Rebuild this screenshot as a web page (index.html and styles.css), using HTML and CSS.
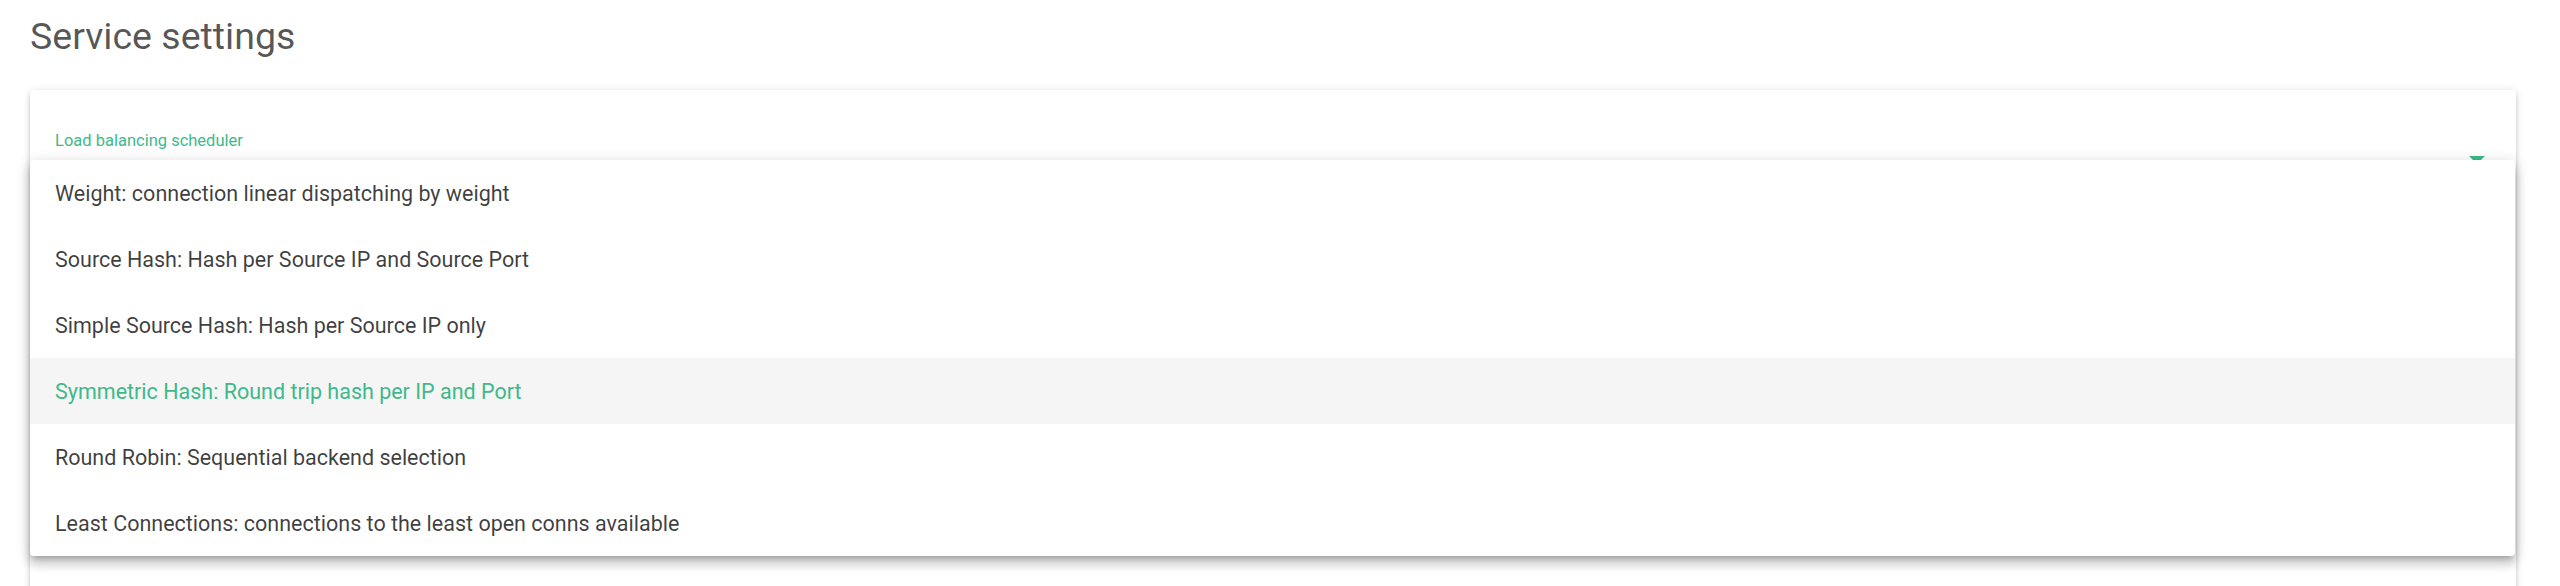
FILE: index.html
```html
<!DOCTYPE html>
<html lang="en">
<head>
<meta charset="utf-8">
<title>Service settings</title>
<link rel="stylesheet" href="styles.css">
</head>
<body>
<div class="page">
  <h1 class="title">Service settings</h1>
  <div class="card">
    <div class="field">
      <div class="field-label">Load balancing scheduler</div>
      <div class="trigger">
        <span class="trigger-value"></span>
        <span class="arrow"></span>
      </div>
      <div class="underline"></div>
    </div>
  </div>
</div>
<div class="menu">
  <div class="option">Weight: connection linear dispatching by weight</div>
  <div class="option">Source Hash: Hash per Source IP and Source Port</div>
  <div class="option">Simple Source Hash: Hash per Source IP only</div>
  <div class="option selected">Symmetric Hash: Round trip hash per IP and Port</div>
  <div class="option">Round Robin: Sequential backend selection</div>
  <div class="option">Least Connections: connections to the least open conns available</div>
</div>
</body>
</html>
```
FILE: styles.css
```css
html, body {
  margin: 0;
  padding: 0;
  background: #ffffff;
  overflow: hidden;
  height: 586px;
}
body {
  font-family: Roboto, "Liberation Sans", sans-serif;
  position: relative;
}
.page {
  padding: 0 44px 0 30px;
}
.title {
  margin: 15px 0 33px 0;
  font-size: 37.5px;
  line-height: 42px;
  font-weight: 400;
  color: rgba(0, 0, 0, 0.66);
}
.card {
  background: #ffffff;
  border-radius: 4px;
  box-shadow: 0 3px 3px -2px rgba(0,0,0,.2), 0 3px 4px 0 rgba(0,0,0,.14), 0 1px 8px 0 rgba(0,0,0,.12);
  padding: 41px 25px 0 25px;
  height: 700px;
}
.field-label {
  font-size: 16.5px;
  line-height: 20px;
  color: #3fb98a;
}
.trigger {
  display: flex;
  align-items: center;
  height: 18px;
  padding-right: 6px;
}
.trigger-value {
  flex: 1;
}
.arrow {
  width: 0;
  height: 0;
  border-left: 8px solid transparent;
  border-right: 8px solid transparent;
  border-top: 8px solid #3fb98a;
}
.underline {
  margin-top: 20px;
  height: 2px;
  background: #3fb98a;
}
.menu {
  position: absolute;
  left: 30px;
  top: 160px;
  width: 2485px;
  background: #ffffff;
  border-radius: 4px;
  box-shadow: 0 5px 5px -3px rgba(0,0,0,.2), 0 8px 10px 1px rgba(0,0,0,.14), 0 3px 14px 2px rgba(0,0,0,.12);
  overflow: hidden;
}
.option {
  height: 66px;
  line-height: 67px;
  padding: 0 25px;
  font-size: 21.5px;
  color: rgba(0,0,0,.76);
  white-space: nowrap;
}
.option.selected {
  background: #f5f5f5;
  color: #3fb98a;
}
```
